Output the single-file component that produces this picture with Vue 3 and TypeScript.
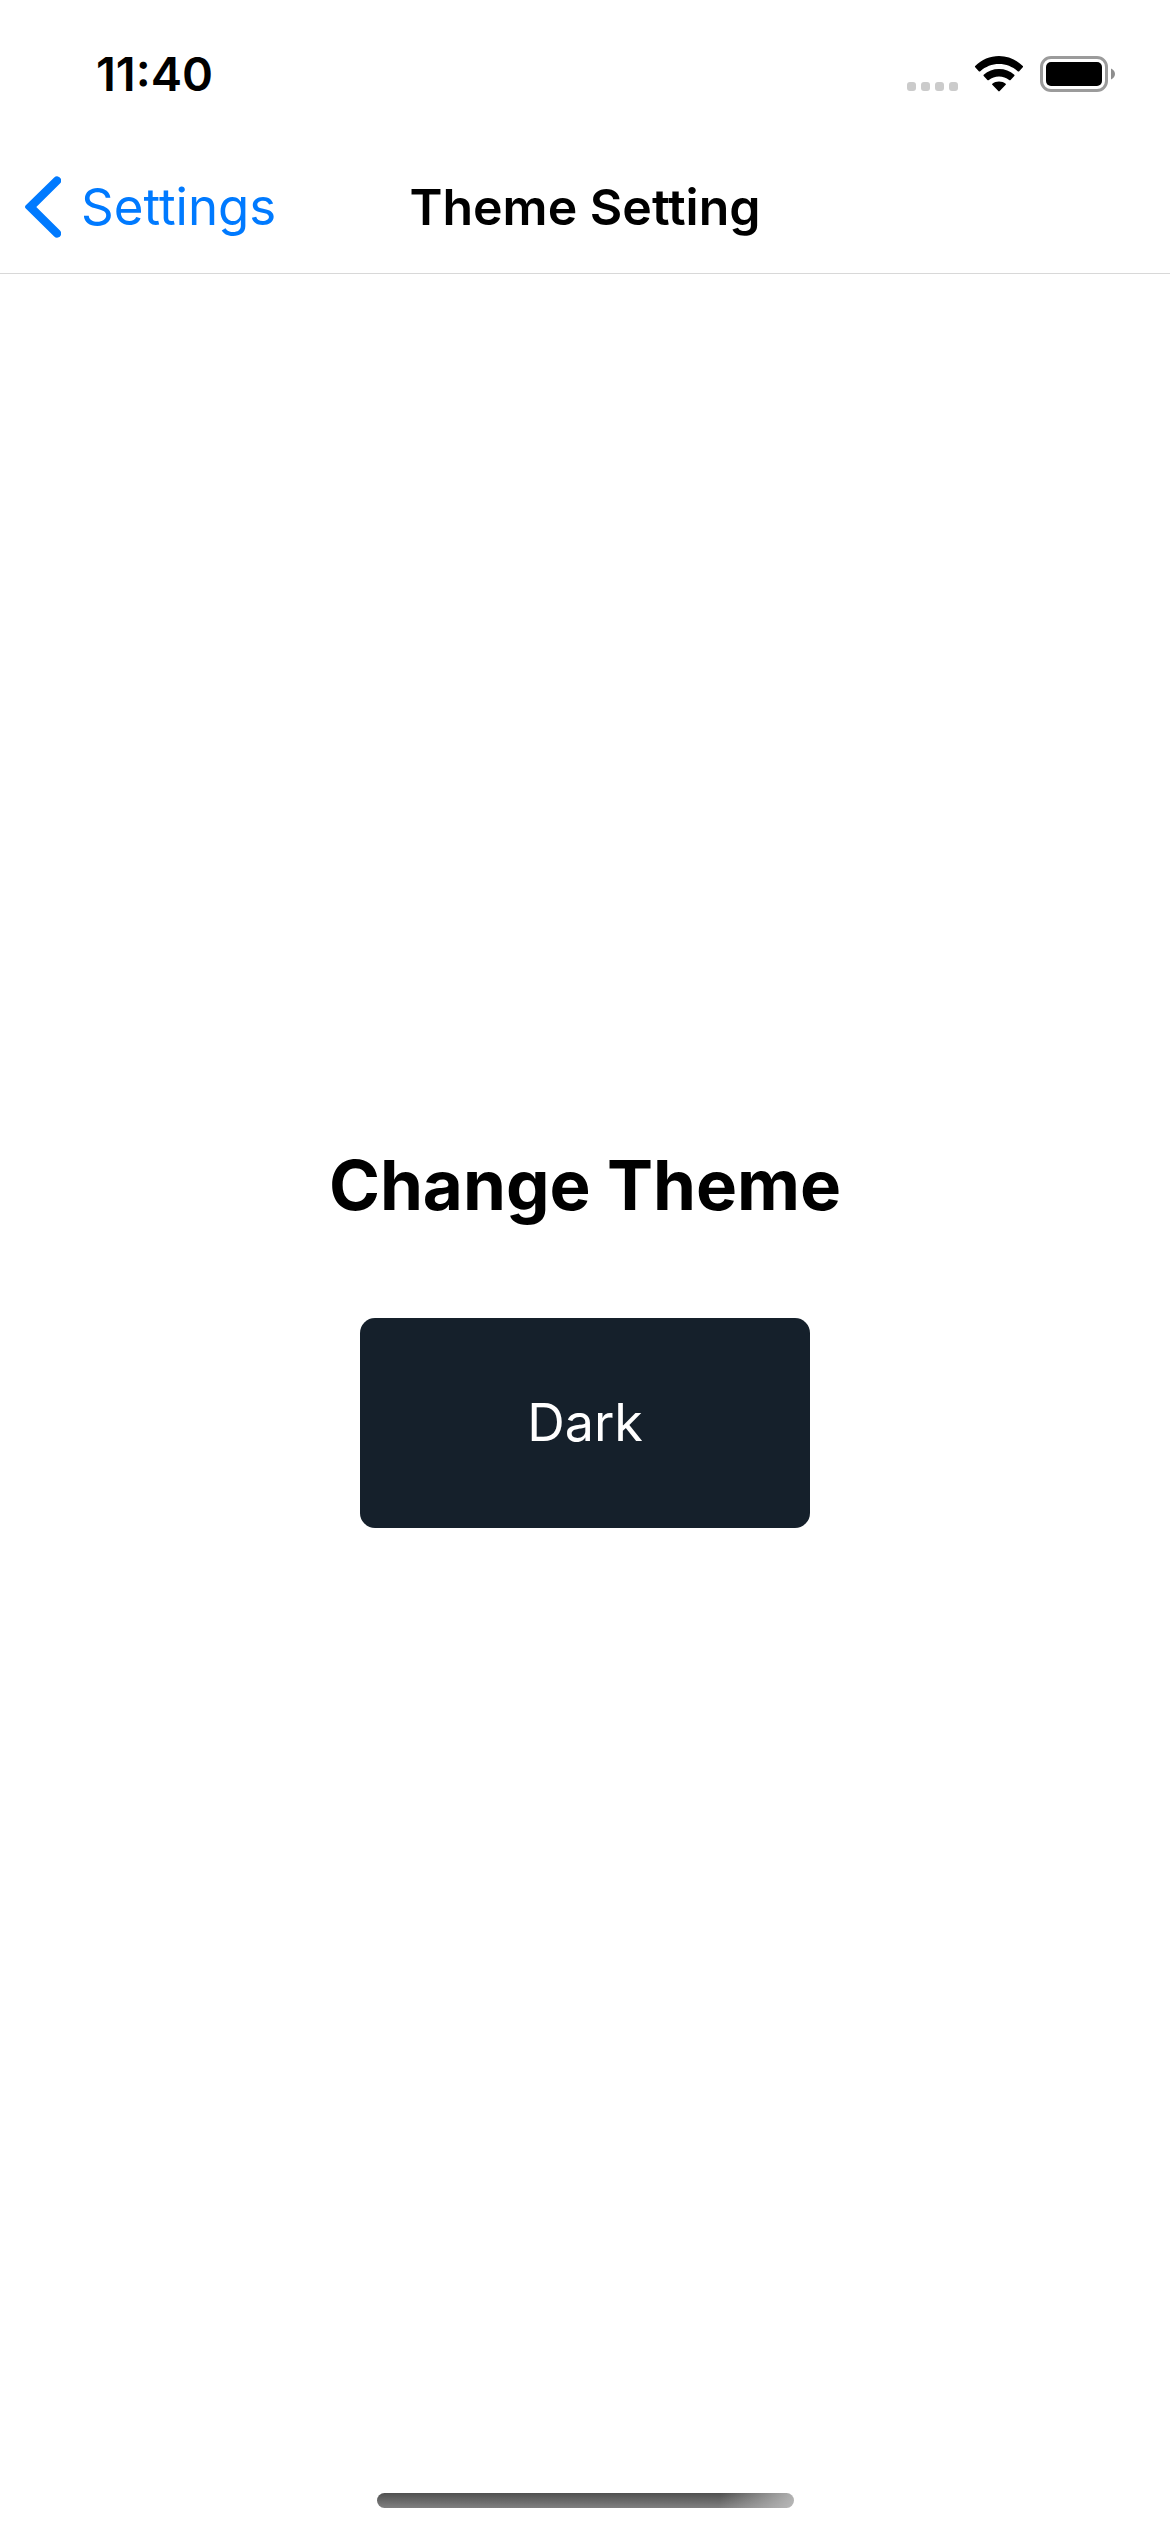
<script setup lang="ts">
import { ref } from 'vue'

const time = ref<string>('11:40')
const signalDots: number[] = [0, 1, 2, 3]
</script>

<template>
  <div class="screen">
    <div class="status-bar">
      <span class="time">{{ time }}</span>
      <div class="indicators">
        <div class="signal" aria-hidden="true">
          <i v-for="dot in signalDots" :key="dot" class="signal-dot"></i>
        </div>
        <svg class="wifi" width="50" height="36" viewBox="0 0 50 36" aria-hidden="true">
          <path d="M1.2 11.2 Q0.6 10.6 1.2 10 C7.7 3.5 16 0 25 0 C34 0 42.3 3.5 48.8 10 Q49.4 10.6 48.8 11.2 L45.2 15.2 Q44.5 15.9 43.7 15.2 C38.5 10.7 32 8.1 25 8.1 C18 8.1 11.5 10.7 6.3 15.2 Q5.5 15.9 4.8 15.2 Z" />
          <path d="M9.7 19.9 Q9.1 19.3 9.7 18.7 C13.9 15 19.2 13 25 13 C30.8 13 36.1 15 40.3 18.7 Q40.9 19.3 40.3 19.9 L36.6 23.9 Q35.9 24.6 35.1 23.9 C32.3 21.6 28.9 20.4 25 20.4 C21.1 20.4 17.7 21.6 14.9 23.9 Q14.1 24.6 13.4 23.9 Z" />
          <path d="M18.3 28.8 Q17.7 28.2 18.3 27.7 C20.2 26.2 22.5 25.5 25 25.5 C27.5 25.5 29.8 26.2 31.7 27.7 Q32.3 28.2 31.7 28.8 L25.7 35.1 Q25 35.8 24.3 35.1 Z" />
        </svg>
        <svg class="battery" width="76" height="36" viewBox="0 0 76 36" aria-hidden="true">
          <rect x="1.5" y="1.5" width="65" height="33" rx="9.5" fill="none" stroke="#9b9b9b" stroke-width="3" />
          <rect x="6" y="6" width="56" height="24" rx="5" fill="#000" />
          <path d="M71 12.500 C73.400 13.400 75 15.500 75 18 C75 20.500 73.400 22.600 71 23.500 Z" fill="#8e8e8e" />
        </svg>
      </div>
    </div>

    <header class="nav-bar">
      <a class="back" href="#settings">
        <svg width="36" height="62" viewBox="0 0 36 62" aria-hidden="true">
          <path d="M0.8 29.2 L29.2 1.5 A4.2 4.2 0 0 1 36 3 V6.3 L35 7.5 L11.3 31 L35 54.5 L36 56 V59 A4.2 4.2 0 0 1 29.2 60.5 L0.8 32.6 Q-0.8 30.9 0.8 29.2 Z" fill="#007aff" />
        </svg>
        <span>Settings</span>
      </a>
      <h1 class="title">Theme Setting</h1>
    </header>

    <main class="content">
      <h2 class="heading">Change Theme</h2>
      <button class="theme-button" type="button">Dark</button>
    </main>

    <footer class="home-area">
      <div class="home-indicator"></div>
    </footer>
  </div>
</template>

<style>
body {
  margin: 0;
  background: #fff;
}
</style>

<style scoped>
.screen {
  display: flex;
  flex-direction: column;
  min-height: 100vh;
  background: #fff;
  color: #000;
  font-family: Inter, "Liberation Sans", sans-serif;
}

.status-bar {
  display: flex;
  align-items: center;
  justify-content: space-between;
  height: 148px;
  padding: 0 54px 0 96px;
  box-sizing: border-box;
}

.time {
  font-size: 47px;
  line-height: 56px;
  font-weight: 600;
}

.indicators {
  display: flex;
  align-items: center;
}

.signal {
  display: flex;
  align-self: flex-end;
  gap: 5px;
  margin-right: 16px;
  padding-bottom: 1px;
}

.signal-dot {
  width: 9px;
  height: 9px;
  border-radius: 3px;
  background: #cbcbcb;
}

.wifi {
  margin-right: 16px;
}

.nav-bar {
  display: grid;
  grid-template-columns: 1fr auto 1fr;
  align-items: center;
  height: 126px;
  padding: 0 25px 7px;
  box-sizing: border-box;
  border-bottom: 1px solid #d8d8d8;
}

.back {
  display: flex;
  align-items: center;
  gap: 20px;
  color: #007aff;
  font-size: 51px;
  line-height: 60px;
  text-decoration: none;
}

.title {
  margin: 0;
  font-size: 50px;
  line-height: 60px;
  font-weight: 600;
}

.content {
  display: flex;
  flex: 1;
  flex-direction: column;
  align-items: center;
  justify-content: center;
  gap: 90px;
  padding-bottom: 34px;
}

.heading {
  margin: 0;
  font-size: 69px;
  line-height: 86px;
  font-weight: 700;
}

.theme-button {
  width: 450px;
  height: 210px;
  padding: 0;
  border: 0;
  border-radius: 15px;
  background: #15202b;
  color: #fff;
  font-family: inherit;
  font-size: 52px;
  line-height: 64px;
}

.home-area {
  display: flex;
  align-items: flex-end;
  justify-content: center;
  height: 102px;
  padding-bottom: 24px;
  box-sizing: border-box;
}

.home-indicator {
  width: 417px;
  height: 15px;
  border-radius: 8px;
  background:
    linear-gradient(100deg, rgba(190, 190, 190, 0) 82%, rgba(190, 190, 190, 0.9) 100%),
    linear-gradient(#505050, #808080);
}
</style>
